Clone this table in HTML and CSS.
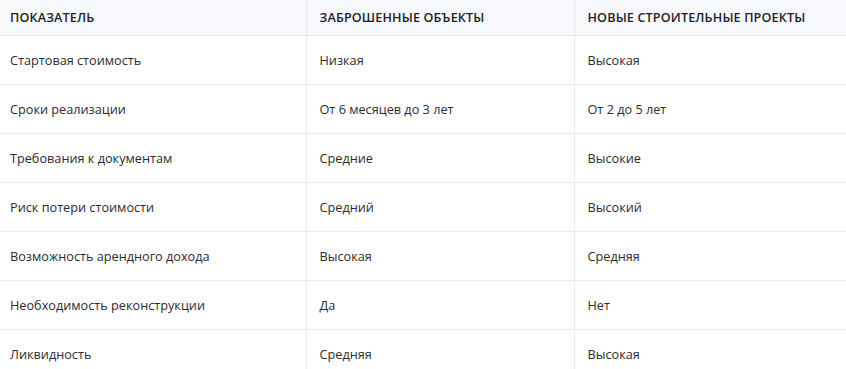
FILE: index.html
```html
<!DOCTYPE html>
<html lang="ru">
<head>
<meta charset="utf-8">
<link rel="stylesheet" href="styles.css">
</head>
<body>
<table class="cmp">
  <colgroup>
    <col class="c1"><col class="c2"><col class="c3">
  </colgroup>
  <thead>
    <tr><th>Показатель</th><th>Заброшенные объекты</th><th>Новые строительные проекты</th></tr>
  </thead>
  <tbody>
    <tr><td>Стартовая стоимость</td><td>Низкая</td><td>Высокая</td></tr>
    <tr><td>Сроки реализации</td><td>От 6 месяцев до 3 лет</td><td>От 2 до 5 лет</td></tr>
    <tr><td>Требования к документам</td><td>Средние</td><td>Высокие</td></tr>
    <tr><td>Риск потери стоимости</td><td>Средний</td><td>Высокий</td></tr>
    <tr><td>Возможность арендного дохода</td><td>Высокая</td><td>Средняя</td></tr>
    <tr><td>Необходимость реконструкции</td><td>Да</td><td>Нет</td></tr>
    <tr><td>Ликвидность</td><td>Средняя</td><td>Высокая</td></tr>
  </tbody>
</table>
</body>
</html>
```
FILE: styles.css
```css
html, body {
  margin: 0;
  padding: 0;
  background: #ffffff;
}
.cmp {
  border-collapse: collapse;
  table-layout: fixed;
  width: 846px;
  font-family: "Open Sans", "Noto Sans", sans-serif;
  font-size: 12.7px;
  color: #2b2c30;
}
.c1 { width: 306px; }
.c2 { width: 268px; }
.c3 { width: 272px; }
.cmp th {
  background: #f7f8fb;
  text-align: left;
  text-transform: uppercase;
  font-size: 12.6px;
  letter-spacing: 0.15px;
  font-weight: 600;
  color: #222327;
  height: 35px;
  padding: 0 10px;
  border-bottom: 1px solid #e6e8ee;
  border-left: 1px solid #e6e8ee;
  vertical-align: middle;
  box-sizing: border-box;
}
.cmp td {
  height: 47px;
  padding: 1px 10px 0 10px;
  border-bottom: 1px solid #e9ebf0;
  border-left: 1px solid #e9ebf0;
  vertical-align: middle;
}
.cmp th:first-child, .cmp td:first-child { border-left: none; }
.cmp th + th, .cmp td + td { padding-left: 13px; }
```
